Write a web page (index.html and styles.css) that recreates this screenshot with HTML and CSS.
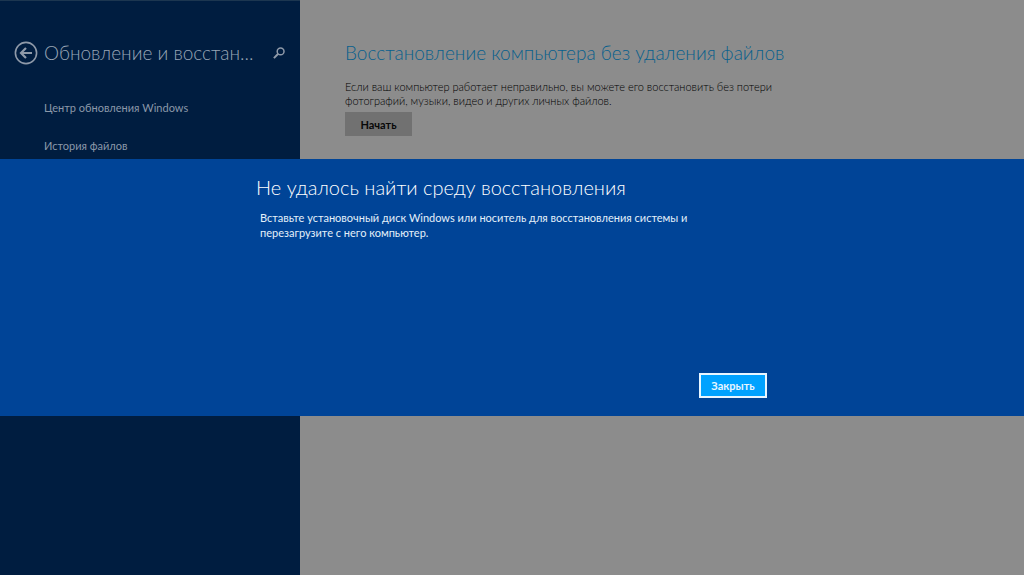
FILE: index.html
```html
<!DOCTYPE html>
<html lang="ru">
<head>
<meta charset="utf-8">
<title>Обновление и восстановление</title>
<link rel="stylesheet" href="styles.css">
</head>
<body>
<div class="settings">
  <aside class="sidebar">
    <header class="sidebar-header">
      <button class="icon-button back" type="button" aria-label="Назад">
        <svg width="24" height="24" viewBox="0 0 24 24" fill="none" stroke="currentColor">
          <circle cx="12" cy="12" r="10.6" stroke-width="1.6"/>
          <path d="M18 12H7.5M12 7l-5 5 5 5" stroke-width="2.2"/>
        </svg>
      </button>
      <h1 class="sidebar-title">Обновление и восстан...</h1>
      <button class="icon-button search" type="button" aria-label="Поиск">
        <svg width="12" height="12" viewBox="0 0 12 12" fill="none" stroke="currentColor">
          <circle cx="7.6" cy="4.4" r="3.4" stroke-width="1.5"/>
          <path d="M5.2 6.8L.9 11.1" stroke-width="2"/>
        </svg>
      </button>
    </header>
    <nav class="sidebar-nav">
      <a class="nav-link" href="#update">Центр обновления Windows</a>
      <a class="nav-link" href="#history">История файлов</a>
    </nav>
  </aside>
  <main class="content">
    <h2 class="content-title">Восстановление компьютера без удаления файлов</h2>
    <p class="content-text">Если ваш компьютер работает неправильно, вы можете его восстановить без потери<br>фотографий, музыки, видео и других личных файлов.</p>
    <button class="start-button" type="button">Начать</button>
  </main>
</div>
<div class="overlay">
  <section class="dialog" role="dialog" aria-modal="true" aria-labelledby="dialog-title">
    <div class="dialog-body">
      <h2 class="dialog-title" id="dialog-title">Не удалось найти среду восстановления</h2>
      <p class="dialog-text">Вставьте установочный диск Windows или носитель для восстановления системы и<br>перезагрузите с него компьютер.</p>
      <button class="close-button" type="button">Закрыть</button>
    </div>
  </section>
</div>
</body>
</html>
```
FILE: styles.css
```css
* {
  box-sizing: border-box;
}

body {
  margin: 0;
  font-family: Lato, "Open Sans", sans-serif;
  font-size: 11px;
}

h1, h2, p {
  margin: 0;
}

button {
  font-family: inherit;
}

.settings {
  display: flex;
  min-height: 100vh;
}

.sidebar {
  flex: 0 0 300px;
  padding: 38px 15px 0 14px;
  border-top: 1px solid #1c3650;
  background: #001d40;
  color: #99a6b6;
}

.sidebar-header {
  display: flex;
  align-items: center;
  height: 28px;
}

.icon-button {
  display: flex;
  padding: 0;
  border: 0;
  background: none;
  color: #8f9aa9;
}

.sidebar-title {
  flex: 1;
  margin-left: 6px;
  font-size: 19px;
  font-weight: 300;
  line-height: 28px;
  white-space: nowrap;
}

.sidebar-nav {
  display: flex;
  flex-direction: column;
  gap: 22px;
  padding: 33px 0 0 30px;
}

.nav-link {
  color: #8b98a9;
  line-height: 16px;
  text-decoration: none;
}

.content {
  flex: 1;
  padding: 39px 45px 0;
  background: #8c8c8c;
}

.content-title {
  color: #08608c;
  font-size: 19px;
  font-weight: 300;
  line-height: 28px;
}

.content-text {
  margin-top: 13px;
  color: #000000;
  font-weight: 300;
  line-height: 14px;
}

.start-button {
  min-width: 67px;
  height: 24px;
  margin-top: 4px;
  border: 0;
  background: #717171;
  color: #080808;
  font-size: 11px;
  font-weight: 700;
}

.overlay {
  position: fixed;
  inset: 0;
  display: flex;
  align-items: center;
}

.dialog {
  flex: 1;
  min-height: 257px;
  padding: 14px 257px 18px 256px;
  background: #004497;
  color: #e4f0fa;
}

.dialog-body {
  display: flex;
  flex-direction: column;
  min-height: 225px;
}

.dialog-title {
  color: #ffffff;
  font-size: 20px;
  font-weight: 300;
  line-height: 28px;
}

.dialog-text {
  margin: 9px 0 0 4px;
  line-height: 15px;
}

.close-button {
  align-self: flex-end;
  min-width: 68px;
  height: 25px;
  margin-top: auto;
  border: 2px solid #e8f6ff;
  background: #00a2ff;
  color: #e8f6ff;
  font-size: 11px;
  font-weight: 700;
}
```
